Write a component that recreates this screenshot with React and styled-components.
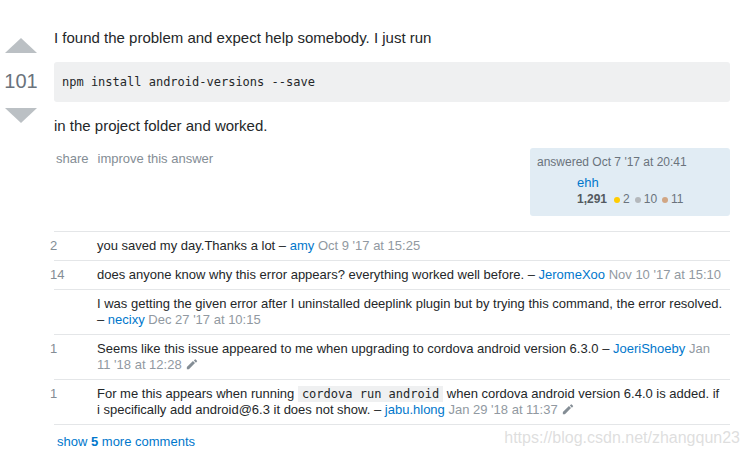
import React from 'react';
import styled, { createGlobalStyle } from 'styled-components';

const GlobalStyle = createGlobalStyle`
  html, body {
    margin: 0;
    padding: 0;
    background: #fff;
  }
  body {
    font-family: "Liberation Sans", Arial, sans-serif;
    color: #242729;
  }
`;

const Page = styled.div`
  position: relative;
  width: 749px;
  height: 455px;
  overflow: hidden;
  box-sizing: border-box;
  padding: 28px 19px 0 0;
  display: grid;
  grid-template-columns: 54px 1fr;
`;

const VoteCell = styled.div`
  display: flex;
  flex-direction: column;
  align-items: center;
  width: 42px;
  padding-top: 10px;
`;

const Arrow = styled.div`
  width: 0;
  height: 0;
  border-left: 16px solid transparent;
  border-right: 16px solid transparent;
  ${(p) => (p.$down ? 'border-top: 15px solid #bbc0c4;' : 'border-bottom: 15px solid #bbc0c4;')}
`;

const VoteCount = styled.div`
  font-size: 20px;
  line-height: 26px;
  color: #6a737c;
  margin: 15px 0 14px;
`;

const PostCell = styled.div`
  min-width: 0;
`;

const Para = styled.p`
  margin: 0 0 14px;
  font-size: 15px;
  line-height: 20px;
`;

const CodeBlock = styled.pre`
  margin: 0 0 14px;
  padding: 12px 8px;
  background: #eff0f1;
  border-radius: 3px;
  font-family: "DejaVu Sans Mono", "Liberation Mono", monospace;
  font-size: 12px;
  line-height: 16px;
  color: #242729;
`;

const PostFooter = styled.div`
  display: flex;
  justify-content: space-between;
  align-items: flex-start;
  margin-top: 13px;
`;

const Menu = styled.div`
  display: flex;
  gap: 9px;
  padding-left: 2px;
  font-size: 13px;
  line-height: 17px;
  color: #848d95;
`;

const UserCard = styled.div`
  width: 200px;
  box-sizing: border-box;
  padding: 7px 7px 8px;
  background: #e1ecf4;
  border-radius: 3px;
  margin-top: -2px;
`;

const Action = styled.div`
  font-size: 12px;
  line-height: 15px;
  color: #6a737c;
  margin-bottom: 4px;
`;

const UserRow = styled.div`
  display: flex;
  gap: 8px;
`;

const Avatar = styled.div`
  width: 32px;
  height: 32px;
  flex: none;
`;

const UserDetails = styled.div`
  display: flex;
  flex-direction: column;
`;

const UserName = styled.a`
  font-size: 13px;
  line-height: 17px;
  color: #0077cc;
  text-decoration: none;
`;

const Rep = styled.div`
  display: flex;
  align-items: center;
  gap: 5px;
  font-size: 12px;
  line-height: 17px;
  color: #6a737c;
`;

const RepScore = styled.span`
  font-weight: bold;
  color: #535a60;
  margin-right: 2px;
`;

const Badge = styled.span`
  display: inline-flex;
  align-items: center;
  gap: 3px;
  &::before {
    content: '';
    width: 6px;
    height: 6px;
    border-radius: 50%;
    background: ${(p) => p.$color};
  }
`;

const Comments = styled.div`
  margin-top: 15px;
`;

const CommentRow = styled.div`
  display: flex;
  border-top: 1px solid #e4e6e8;
  padding: 6px 0;
  font-size: 13px;
  line-height: 16px;
  &:last-child {
    border-bottom: 1px solid #e4e6e8;
  }
`;

const Score = styled.div`
  flex: none;
  width: 47px;
  margin-left: -4px;
  color: #848d95;
`;

const CommentBody = styled.div`
  flex: 1;
  min-width: 0;
  padding-right: 5px;
  color: #242729;
`;

const UserLink = styled.a`
  color: #0077cc;
  text-decoration: none;
`;

const CommentDate = styled.span`
  color: #9199a1;
`;

const InlineCode = styled.code`
  font-family: "DejaVu Sans Mono", "Liberation Mono", monospace;
  font-size: 12px;
  line-height: 14px;
  background: #eff0f1;
  padding: 1px 4px;
`;

const EditIcon = styled.svg`
  width: 12px;
  height: 12px;
  margin-left: 4px;
  vertical-align: -1px;
  fill: #848d95;
`;

const ShowMore = styled.a`
  display: block;
  padding: 8px 0 0 3px;
  font-size: 13px;
  line-height: 17px;
  color: #0077cc;
  text-decoration: none;
  b {
    color: #0077cc;
  }
`;

const Watermark = styled.div`
  position: absolute;
  right: 9px;
  bottom: 8px;
  font-size: 16px;
  color: rgba(200, 200, 200, 0.6);
  pointer-events: none;
`;

const Pencil = () => (
  <EditIcon viewBox="0 0 14 14">
    <path d="M1 10.6V13h2.4l7.1-7.1-2.4-2.4L1 10.6zm11.8-6.4a.6.6 0 0 0 0-.9l-1.5-1.5a.6.6 0 0 0-.9 0L9.2 3l2.4 2.4 1.2-1.2z" />
  </EditIcon>
);

const comments = [
  { score: '2', text: 'you saved my day.Thanks a lot', user: 'amy', date: "Oct 9 '17 at 15:25" },
  {
    score: '14',
    text: 'does anyone know why this error appears? everything worked well before.',
    user: 'JeromeXoo',
    date: "Nov 10 '17 at 15:10",
  },
  {
    score: '',
    text: 'I was getting the given error after I uninstalled deeplink plugin but by trying this command, the error resolved.',
    user: 'necixy',
    date: "Dec 27 '17 at 10:15",
  },
  {
    score: '1',
    text: 'Seems like this issue appeared to me when upgrading to cordova android version 6.3.0',
    user: 'JoeriShoeby',
    date: "Jan 11 '18 at 12:28",
    edited: true,
  },
  {
    score: '1',
    text: (
      <>
        For me this appears when running <InlineCode>cordova run android</InlineCode> when cordova android
        version 6.4.0 is added. if i specifically add android@6.3 it does not show.
      </>
    ),
    user: 'jabu.hlong',
    date: "Jan 29 '18 at 11:37",
    edited: true,
  },
];

export default function App() {
  return (
    <>
      <GlobalStyle />
      <Page>
        <VoteCell>
          <Arrow />
          <VoteCount>101</VoteCount>
          <Arrow $down />
        </VoteCell>
        <PostCell>
          <Para>I found the problem and expect help somebody. I just run</Para>
          <CodeBlock>npm install android-versions --save</CodeBlock>
          <Para>in the project folder and worked.</Para>
          <PostFooter>
            <Menu>
              <span>share</span>
              <span>improve this answer</span>
            </Menu>
            <UserCard>
              <Action>answered Oct 7 '17 at 20:41</Action>
              <UserRow>
                <Avatar />
                <UserDetails>
                  <UserName>ehh</UserName>
                  <Rep>
                    <RepScore>1,291</RepScore>
                    <Badge $color="#ffcc01">2</Badge>
                    <Badge $color="#b4b8bc">10</Badge>
                    <Badge $color="#d1a684">11</Badge>
                  </Rep>
                </UserDetails>
              </UserRow>
            </UserCard>
          </PostFooter>
          <Comments>
            {comments.map((c, i) => (
              <CommentRow key={i}>
                <Score>{c.score}</Score>
                <CommentBody>
                  {c.text} – <UserLink>{c.user}</UserLink> <CommentDate>{c.date}</CommentDate>
                  {c.edited && <Pencil />}
                </CommentBody>
              </CommentRow>
            ))}
          </Comments>
          <ShowMore>
            show <b>5</b> more comments
          </ShowMore>
        </PostCell>
        <Watermark>https://blog.csdn.net/zhangqun23</Watermark>
      </Page>
    </>
  );
}
